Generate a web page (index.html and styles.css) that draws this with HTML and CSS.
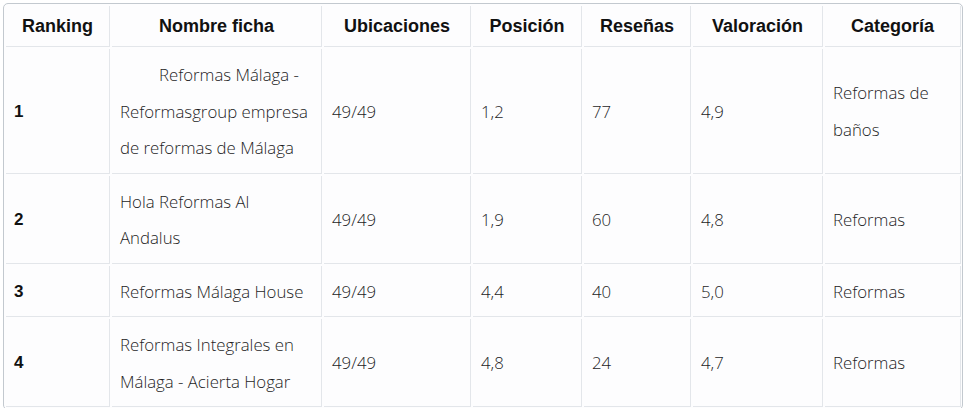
FILE: index.html
```html
<!DOCTYPE html>
<html lang="es">
<head>
<meta charset="utf-8">
<title>Ranking</title>
<link rel="stylesheet" href="styles.css">
</head>
<body>
<div class="wrap">
  <table class="rank">
    <colgroup>
      <col class="c1"><col class="c2"><col class="c3"><col class="c4"><col class="c5"><col class="c6"><col class="c7">
    </colgroup>
    <thead>
      <tr>
        <th>Ranking</th>
        <th>Nombre ficha</th>
        <th>Ubicaciones</th>
        <th>Posición</th>
        <th>Reseñas</th>
        <th>Valoración</th>
        <th>Categoría</th>
      </tr>
    </thead>
    <tbody>
      <tr>
        <td class="num">1</td>
        <td class="indent">Reformas Málaga - Reformasgroup empresa de reformas de Málaga</td>
        <td>49/49</td>
        <td>1,2</td>
        <td>77</td>
        <td>4,9</td>
        <td>Reformas de baños</td>
      </tr>
      <tr>
        <td class="num">2</td>
        <td>Hola Reformas Al Andalus</td>
        <td>49/49</td>
        <td>1,9</td>
        <td>60</td>
        <td>4,8</td>
        <td>Reformas</td>
      </tr>
      <tr>
        <td class="num">3</td>
        <td>Reformas Málaga House</td>
        <td>49/49</td>
        <td>4,4</td>
        <td>40</td>
        <td>5,0</td>
        <td>Reformas</td>
      </tr>
      <tr>
        <td class="num">4</td>
        <td>Reformas Integrales en Málaga - Acierta Hogar</td>
        <td>49/49</td>
        <td>4,8</td>
        <td>24</td>
        <td>4,7</td>
        <td>Reformas</td>
      </tr>
    </tbody>
  </table>
</div>
</body>
</html>
```

FILE: styles.css
```css
html, body {
  margin: 0;
  padding: 0;
  background: #ffffff;
}

body {
  padding: 3px 4px 0 3px;
}

.wrap {
  border: 1px solid #c3c9cf;
  border-radius: 5px;
  background: #fdfdfe;
}

.rank {
  width: 100%;
  table-layout: fixed;
  border-collapse: separate;
  border-spacing: 2px;
}

.c1 { width: 104px; }
.c2 { width: 210px; }
.c3 { width: 147px; }
.c4 { width: 109px; }
.c5 { width: 107px; }
.c6 { width: 130px; }
.c7 { width: 136px; }

.rank th,
.rank td {
  border-right: 1px solid #e3e6ea;
  border-bottom: 1px solid #e3e6ea;
  vertical-align: middle;
}

.rank th {
  font-family: "Liberation Sans", Arial, sans-serif;
  font-weight: bold;
  font-size: 18px;
  line-height: 26px;
  color: #111111;
  text-align: center;
  padding: 7px 4px;
  white-space: nowrap;
}

.rank td {
  font-family: "Open Sans", "Noto Sans", sans-serif;
  font-weight: 300;
  font-size: 16.8px;
  line-height: 36.5px;
  color: #1e1e1e;
  text-align: left;
  padding: 8px 7px 6px 8px;
}

.rank td.num {
  font-family: "Liberation Sans", Arial, sans-serif;
  font-weight: bold;
  font-size: 17px;
  color: #111111;
}

.rank td.indent {
  text-indent: 39px;
}
```
